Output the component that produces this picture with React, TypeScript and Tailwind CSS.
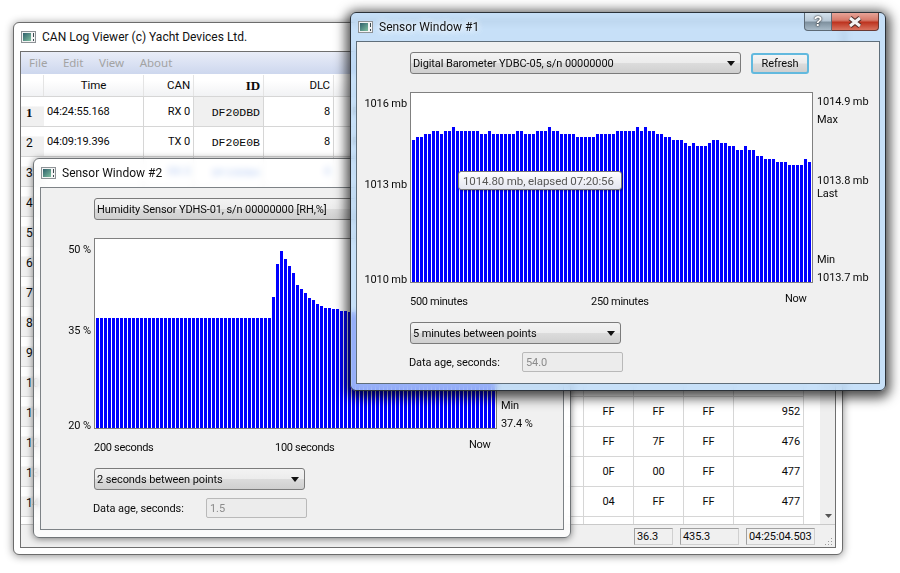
import React from "react";

const baroTops = [
  140, 137, 137, 134, 134, 131, 131, 134, 131, 131, 127, 131, 131, 131, 131, 131, 131, 134, 134, 131,
  134, 134, 134, 134, 134, 134, 131, 131, 134, 134, 134, 131, 131, 131, 127, 131, 131, 134, 134, 134,
  134, 137, 137, 137, 137, 137, 134, 134, 134, 134, 134, 131, 131, 131, 131, 131, 127, 131, 127, 131,
  131, 134, 134, 137, 137, 140, 140, 140, 143, 146, 143, 146, 146, 146, 143, 140, 140, 143, 143, 146,
  146, 150, 150, 146, 150, 150, 156, 156, 159, 159, 159, 162, 162, 162, 165, 165, 165, 165, 159, 162,
].map((t) => t - 92);

const humidTops = [
  ...Array(44).fill(318),
  297, 264, 251, 259, 266, 273, 285, 289, 293, 298, 300, 304, 306, 308, 308, 309, 309, 311, 311, 312,
  312, 313, 313, 313, 314, 314, 314, 315, 315, 315, 315, 316, 316, 316, 316, 316, 317, 317, 317, 317,
  317, 317, 317, 317, 318, 318, 318, 318, 318, 318, 318, 318, 318, 318, 318, 318,
].map((t) => t - 238);

const rows = [
  { t: "04:24:55.168", c: "RX 0", id: "DF20DBD", d: ["FF", "FF", "FF", "FF", "FF", "FF", "FF", "FF"], n: "952" },
  { t: "04:09:19.396", c: "TX 0", id: "DF20E0B", d: ["FF", "FF", "FF", "FF", "FF", "FF", "FF", "FF"], n: "476" },
  { t: "", c: "RX 0", id: "DF20DBA", d: ["FF", "FF", "FF", "FF", "FF", "FF", "FF", "FF"], n: "477" },
  { t: "", c: "", id: "", d: [], n: "" },
  { t: "", c: "", id: "", d: [], n: "" },
  { t: "", c: "", id: "", d: [], n: "" },
  { t: "", c: "", id: "", d: [], n: "" },
  { t: "", c: "", id: "", d: [], n: "" },
  { t: "", c: "", id: "", d: [], n: "" },
  { t: "", c: "", id: "", d: [], n: "" },
  { t: "", c: "", id: "", d: ["", "", "", "", "", "FF", "FF", "FF"], n: "952" },
  { t: "", c: "", id: "", d: ["", "", "", "", "", "FF", "7F", "FF"], n: "476" },
  { t: "", c: "", id: "", d: ["", "", "", "", "", "0F", "00", "FF"], n: "477" },
  { t: "", c: "", id: "", d: ["", "", "", "", "", "04", "FF", "FF"], n: "477" },
  { t: "", c: "", id: "", d: [], n: "" },
];

const gridCols = "grid grid-cols-[23px_100px_50px_70px_70px_repeat(8,50px)_70px]";
const cell = "h-[30px] pt-[2px] flex items-center border-r border-b border-[#d6d6d6]";
const statusBox = "h-[17px] pl-[2px] pt-[2px] flex items-center border border-[#d0d0d0] border-l-[#a0a0a0] border-t-[#a0a0a0]";

const AppIcon = () => (
  <svg width="15" height="12" viewBox="0 0 15 12" className="shrink-0">
    <defs>
      <linearGradient id="ico" x1="0" y1="0" x2="1" y2="1">
        <stop offset="0" stopColor="#2f5f6b" />
        <stop offset="1" stopColor="#7fc0a0" />
      </linearGradient>
    </defs>
    <rect x="0.5" y="0.5" width="14" height="11" fill="#f4f4f4" stroke="#8d9296" />
    <rect x="2" y="2" width="8" height="8" fill="url(#ico)" />
    <rect x="12" y="2" width="1" height="4" fill="#3c4a50" />
    <rect x="12" y="8" width="1" height="2" fill="#3c4a50" />
  </svg>
);

const Combo = ({ text, w }: { text: string; w: string }) => (
  <div
    className={`${w} h-[22px] shrink-0 flex items-center justify-between pl-[2px] pr-[5px] rounded-[3px] border border-[#7b7b7b] bg-[linear-gradient(#f3f3f3_0%,#ececec_48%,#dcdcdc_50%,#cfcfcf_100%)] overflow-hidden whitespace-nowrap`}
  >
    <span className="pt-[3px]">{text}</span>
    <svg width="8" height="5" viewBox="0 0 8 5" className="shrink-0">
      <path d="M0 0H8L4 5Z" fill="#111" />
    </svg>
  </div>
);

const Bars = ({ tops }: { tops: number[] }) => (
  <div className="w-[403px] h-[191px] shrink-0 flex items-end gap-px pl-px bg-white border border-[#808080] overflow-hidden">
    {tops.map((t, i) => (
      <div key={i} className="w-[3px] shrink-0 bg-[#0000ff]" style={{ height: 190 - t }} />
    ))}
  </div>
);

type SensorProps = {
  title: string;
  device: string;
  tops: number[];
  left: string[];
  right: string[];
  start: string;
  mid: string;
  rate: string;
  age: string;
  frame: string;
  clientBorder: string;
  titleBtns?: boolean;
  children?: React.ReactNode;
};

const SensorWindow = (p: SensorProps) => (
  <div className={`absolute flex flex-col border rounded-[6px] backdrop-blur-[3px] ${p.frame}`}>
    <div className="h-[28px] shrink-0 flex items-center pl-[7px] pr-[6px] gap-[6px]">
      <AppIcon />
      <span className="text-[12px] tracking-normal text-[#111] [text-shadow:0_0_6px_#fff,0_0_6px_#fff]">{p.title}</span>
      {p.titleBtns && (
        <div className="ml-auto self-start flex h-[18px]">
          <div className="w-[28px] flex items-center justify-center rounded-bl-[4px] border border-t-0 border-[#5d6a76] bg-[linear-gradient(#d4e2ee_0%,#b8c8d6_45%,#7f919f_55%,#a8bac8_100%)] font-['Liberation_Sans',sans-serif] font-bold text-[14px] text-white [text-shadow:0_0_2px_#222,0_0_1px_#222]">
            ?
          </div>
          <div className="w-[47px] flex items-center justify-center rounded-br-[4px] border border-t-0 border-l-0 border-[#6a3a34] bg-[linear-gradient(#e7a498_0%,#d67a6a_42%,#bd3420_55%,#d9735f_100%)]">
            <svg width="18" height="12" viewBox="0 0 18 12">
              <path d="M4 2L14 10M14 2L4 10" stroke="#4a2a26" strokeWidth="5" />
              <path d="M4 2L14 10M14 2L4 10" stroke="#f4f4f4" strokeWidth="3" />
            </svg>
          </div>
        </div>
      )}
    </div>
    <div className={`relative flex-1 mx-auto w-[524px] bg-[#f0f0f0] border pt-[10px] pl-[53px] ${p.clientBorder}`}>
      <div className="flex items-center gap-[10px]">
        <Combo text={p.device} w="w-[331px]" />
        <div className="w-[58px] h-[21px] pt-[3px] flex items-center justify-center rounded-[3px] border-2 border-[#62b9de] bg-[linear-gradient(#f4f4f4_0%,#ebebeb_48%,#dcdcdc_52%,#cfcfcf_100%)]">
          Refresh
        </div>
      </div>
      <div className="mt-[18px] -ml-[53px] flex h-[191px]">
        <div className="w-[53px] shrink-0 pt-[4px] pr-[3px] text-right grid grid-rows-[81px_95px_16px] leading-4">
          {p.left.map((l) => (
            <div key={l}>{l}</div>
          ))}
        </div>
        <Bars tops={p.tops} />
        <div className="pl-[4px] leading-4 whitespace-nowrap flex flex-col">
          <div className="mt-[2px]">{p.right[0]}</div>
          <div className="mt-[2px]">Max</div>
          <div className="mt-[45px]">{p.right[1]}</div>
          <div className="-mt-[3px]">Last</div>
          <div className="mt-[50px]">Min</div>
          <div className="mt-[2px]">{p.right[2]}</div>
        </div>
      </div>
      <div className="mt-[11px] h-[15px] flex items-start leading-4 tracking-[-0.3px]">
        <div className="w-[181px]">{p.start}</div>
        <div className="w-[194px]">{p.mid}</div>
        <div className="-mt-[3px]">Now</div>
      </div>
      <div className="mt-[13px]">
        <Combo text={p.rate} w="w-[211px]" />
      </div>
      <div className="mt-[8px] flex items-center">
        <div className="w-[112px] -ml-px pt-[2px] shrink-0">Data age, seconds:</div>
        <div className="w-[101px] h-[20px] pt-[2px] flex items-center pl-[3px] ml-px rounded-[2px] border border-[#b9b9b9] bg-[#ececec] text-[#8b8b8b]">
          {p.age}
        </div>
      </div>
      {p.children}
    </div>
  </div>
);

const MainWindow = () => (
  <div className="absolute left-[13px] top-[22px] w-[830px] h-[533px] flex flex-col bg-white border border-[#6c6c6c] rounded-[6px] shadow-[0_1px_8px_rgba(0,0,0,0.45)]">
    <div className="h-[28px] shrink-0 flex items-center pl-[7px] gap-[6px]">
      <AppIcon />
      <span className="text-[12px] tracking-normal text-[#111]">CAN Log Viewer (c) Yacht Devices Ltd.</span>
    </div>
    <div className="mx-[6px] w-[816px] h-[497px] flex flex-col border border-[#6f6f6f] bg-white overflow-hidden">
      <div className="h-[22px] shrink-0 flex items-center gap-[15.5px] pl-[8px] font-['Noto_Sans',sans-serif] text-[11.5px] tracking-normal text-[#a3a3a3] bg-[linear-gradient(#e9edf8,#cdd7ee)]">
        <span>File</span>
        <span>Edit</span>
        <span>View</span>
        <span>About</span>
      </div>
      <div className="flex-1 flex overflow-hidden">
        <div className="w-[799px] shrink-0 overflow-hidden">
          <div className={`${gridCols} h-[23px] pt-px text-[11.5px] border-b border-[#d6d6d6] bg-[linear-gradient(#fff_30%,#f1f2f4_100%)]`}>
            <div className="border-r border-[#e4e4e4]" />
            <div className="flex items-center justify-center border-r border-[#e4e4e4]">Time</div>
            <div className="flex items-center justify-end pr-[3px] border-r border-[#e4e4e4]">CAN</div>
            <div className="flex items-center justify-end pr-[3px] border-r border-[#e4e4e4] font-bold font-['Liberation_Serif',serif] text-[13px]">ID</div>
            <div className="flex items-center justify-end pr-[3px] border-r border-[#e4e4e4]">DLC</div>
          </div>
          {rows.map((r, i) => (
            <div key={i} className={gridCols}>
              <div className={`${cell} pl-[5px] border-r-0 bg-[linear-gradient(#fff_30%,#f0f0f0_35%)] ${i === 0 ? "font-bold font-['Liberation_Serif',serif] text-[13px]" : "text-[12px]"}`}>
                {i < 14 ? i + 1 : ""}
              </div>
              <div className={`${cell} pl-[3px]`}>{r.t}</div>
              <div className={`${cell} justify-end pr-[3px] ${i === 2 ? "text-[#1560d8]" : ""}`}>{r.c}</div>
              <div className={`${cell} justify-end pr-[3px] font-['Liberation_Mono',monospace] text-[11.5px] tracking-normal ${i === 0 ? "bg-[#f0f0f0]" : ""} ${i === 2 ? "text-[#1560d8]" : ""}`}>{r.id}</div>
              <div className={`${cell} justify-end pr-[3px] ${i === 2 ? "text-[#1560d8]" : ""}`}>{r.id ? "8" : ""}</div>
              {Array.from({ length: 8 }).map((_, k) => (
                <div key={k} className={`${cell} justify-center`}>
                  {r.d[k]}
                </div>
              ))}
              <div className={`${cell} justify-end pr-[3px]`}>{i > 9 ? r.n : ""}</div>
            </div>
          ))}
        </div>
        <div className="flex-1" />
        <div className="w-[16px] shrink-0 mr-px flex flex-col justify-end items-center pb-[6px] bg-[#efefef]">
          <svg width="7" height="4" viewBox="0 0 7 4">
            <path d="M0 0H7L3.5 4Z" fill="#555" />
          </svg>
        </div>
      </div>
      <div className="h-[23px] shrink-0 flex items-center justify-end gap-[7px] pr-[20px] bg-[#f0f0f0] border-t border-[#c9c9c9] relative">
        <div className={`${statusBox} w-[39px]`}>36.3</div>
        <div className={`${statusBox} w-[59px]`}>435.3</div>
        <div className={`${statusBox} w-[69px]`}>04:25:04.503</div>
        <svg width="8" height="8" viewBox="0 0 8 8" className="absolute right-[2px] bottom-[1px]">
          <path d="M6 0h1v1H6zM3 3h1v1H3zM6 3h1v1H6zM0 6h1v1H0zM3 6h1v1H3zM6 6h1v1H6z" fill="#9a9a9a" />
        </svg>
      </div>
    </div>
  </div>
);

export default function App() {
  return (
    <div className="relative w-[900px] h-[573px] overflow-hidden bg-white font-['Roboto',sans-serif] text-[11px] tracking-[-0.1px] text-[#0a0a0a]">
      <MainWindow />
      <SensorWindow
        title="Sensor Window #2"
        device="Humidity Sensor YDHS-01, s/n 00000000 [RH,%]"
        tops={humidTops}
        left={["50 %", "35 %", "20 %"]}
        right={["49.6 %", "37.6 %", "37.4 %"]}
        start="200 seconds"
        mid="100 seconds"
        rate="2 seconds between points"
        age="1.5"
        frame="left-[33px] top-[158px] w-[538px] h-[380px] pb-[7px] border-[#6f7376] bg-white/70 shadow-[0_1px_7px_rgba(0,0,0,0.5)]"
        clientBorder="border-[#7d8286]"
      />
      <SensorWindow
        title="Sensor Window #1"
        device="Digital Barometer YDBC-05, s/n 00000000"
        tops={baroTops}
        left={["1016 mb", "1013 mb", "1010 mb"]}
        right={["1014.9 mb", "1013.8 mb", "1013.7 mb"]}
        start="500 minutes"
        mid="250 minutes"
        rate="5 minutes between points"
        age="54.0"
        frame="left-[350px] top-[12px] w-[536px] h-[379px] pb-[6px] border-[#2b3138] bg-[#b4d6f6]/75 shadow-[0_3px_12px_4px_rgba(0,0,0,0.7)]"
        clientBorder="border-[#5f6e7a]"
        titleBtns
      >
        <div className="absolute left-[101px] top-[129px] w-[164px] h-[19px] pt-[2px] flex items-center pl-[4px] rounded-[3px] border border-[#767676] text-[11.5px] text-[#575757] bg-[linear-gradient(#fff,#e4e5f0)] shadow-[1px_1px_2px_rgba(0,0,0,0.35)] whitespace-nowrap">
          1014.80 mb, elapsed 07:20:56
        </div>
      </SensorWindow>
    </div>
  );
}
